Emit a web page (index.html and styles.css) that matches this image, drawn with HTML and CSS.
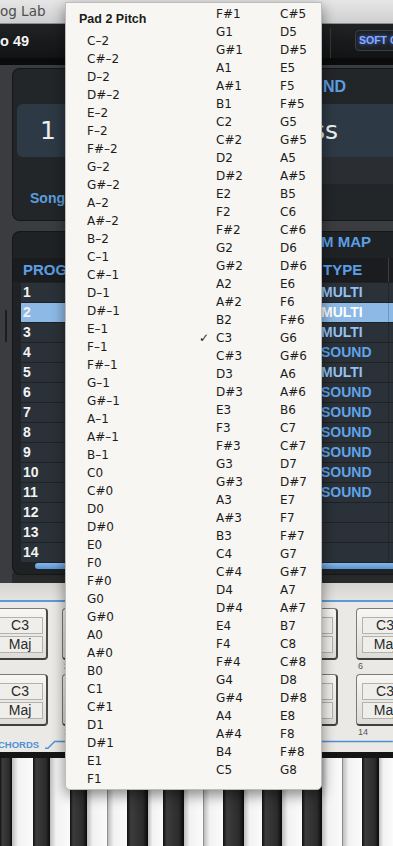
FILE: index.html
```html
<!DOCTYPE html>
<html lang="en">
<head>
    <link rel="stylesheet" href="styles.css">
</head>
<body>
    <div class="app">
        <div class="titlebar"><span class="title">og Lab</span></div>
        <div class="toolbar">
            <span class="device">o 49</span>
            <div class="toolbar-right">
                <span class="sep"></span>
                <span class="soft">SOFT CLIP</span>
            </div>
        </div>
        <div class="strip"></div>

        <div class="panels">
            <div class="sidebar"><span class="handle"></span></div>
            <div class="panel-col">
                <div class="panel sound-panel">
                    <div class="panel-title">SOUND</div>
                    <div class="sound-box">
                        <span class="sound-num">1</span>
                        <span class="sound-name">Bass</span>
                    </div>
                    <div class="sound-sub"></div>
                    <div class="sound-foot">Song</div>
                </div>
                <div class="panel map-panel">
                    <div class="panel-title map-title">PROGRAM MAP</div>
                    <div class="map-head">
                        <span class="col-num">PROG #</span>
                        <span class="col-type">TYPE</span>
                        <span class="col-rest"></span>
                    </div>
                    <div class="map-rows">
                        <div class="row"><span class="col-num">1</span><span class="col-type multi">MULTI</span><span class="col-rest"></span></div>
                        <div class="row active"><span class="col-num">2</span><span class="col-type multi">MULTI</span><span class="col-rest"></span></div>
                        <div class="row"><span class="col-num">3</span><span class="col-type multi">MULTI</span><span class="col-rest"></span></div>
                        <div class="row"><span class="col-num">4</span><span class="col-type">SOUND</span><span class="col-rest"></span></div>
                        <div class="row"><span class="col-num">5</span><span class="col-type multi">MULTI</span><span class="col-rest"></span></div>
                        <div class="row"><span class="col-num">6</span><span class="col-type">SOUND</span><span class="col-rest"></span></div>
                        <div class="row"><span class="col-num">7</span><span class="col-type">SOUND</span><span class="col-rest"></span></div>
                        <div class="row"><span class="col-num">8</span><span class="col-type">SOUND</span><span class="col-rest"></span></div>
                        <div class="row"><span class="col-num">9</span><span class="col-type">SOUND</span><span class="col-rest"></span></div>
                        <div class="row"><span class="col-num">10</span><span class="col-type">SOUND</span><span class="col-rest"></span></div>
                        <div class="row"><span class="col-num">11</span><span class="col-type">SOUND</span><span class="col-rest"></span></div>
                        <div class="row"><span class="col-num">12</span><span class="col-type"></span><span class="col-rest"></span></div>
                        <div class="row"><span class="col-num">13</span><span class="col-type"></span><span class="col-rest"></span></div>
                        <div class="row"><span class="col-num">14</span><span class="col-type"></span><span class="col-rest"></span></div>
                    </div>
                    <div class="scrollbar"></div>
                </div>
            </div>
        </div>

        <div class="chords">
            <div class="chords-top"></div>
            <div class="pad-row">
                <div class="pad-group left">
                    <div class="pad-slot"><div class="pad"><span class="cell">C3</span><span class="cell">Maj</span></div><span class="pad-label">1</span></div>
                    <div class="pad-slot"><div class="pad"><span class="cell">C3</span><span class="cell">Maj</span></div><span class="pad-label">2</span></div>
                </div>
                <div class="pad-group right">
                    <div class="pad-slot"><div class="pad"><span class="cell">C3</span><span class="cell">Maj</span></div><span class="pad-label">5</span></div>
                    <div class="pad-slot"><div class="pad"><span class="cell">C3</span><span class="cell">Maj</span></div><span class="pad-label">6</span></div>
                </div>
            </div>
            <div class="pad-row">
                <div class="pad-group left">
                    <div class="pad-slot"><div class="pad"><span class="cell">C3</span><span class="cell">Maj</span></div><span class="pad-label">9</span></div>
                    <div class="pad-slot"><div class="pad"><span class="cell">C3</span><span class="cell">Maj</span></div><span class="pad-label">10</span></div>
                </div>
                <div class="pad-group right">
                    <div class="pad-slot"><div class="pad"><span class="cell">C3</span><span class="cell">Maj</span></div><span class="pad-label">13</span></div>
                    <div class="pad-slot"><div class="pad"><span class="cell">C3</span><span class="cell">Maj</span></div><span class="pad-label">14</span></div>
                </div>
            </div>
            <div class="chords-label">
                <span class="chords-name">CHORDS</span>
                <svg class="chords-line" width="360" height="12" viewBox="0 0 360 12">
                    <path d="M0 10.5 L3 10.5 L10 3.5 L360 3.5" fill="none" stroke="#4f91d6" stroke-width="1.5"/>
                </svg>
            </div>
        </div>

        <div class="keyboard">
            <div class="keys">
                <span class="bk"></span><span class="wk"></span><span class="bk"></span><span class="wk"></span><span class="bk"></span>
                <span class="wk"></span><span class="wk edge"></span><span class="bk"></span><span class="wk"></span><span class="bk"></span>
                <span class="wk"></span><span class="wk edge"></span><span class="bk"></span><span class="wk"></span><span class="bk"></span>
                <span class="wk"></span><span class="bk"></span><span class="wk"></span><span class="wk edge"></span><span class="bk"></span>
                <span class="wk"></span>
            </div>
        </div>
    </div>

    <div class="menu">
        <ul class="menu-col first">
            <li class="menu-head">Pad 2 Pitch</li>
            <li>C–2</li><li>C#–2</li><li>D–2</li><li>D#–2</li><li>E–2</li><li>F–2</li>
            <li>F#–2</li><li>G–2</li><li>G#–2</li><li>A–2</li><li>A#–2</li><li>B–2</li>
            <li>C–1</li><li>C#–1</li><li>D–1</li><li>D#–1</li><li>E–1</li><li>F–1</li>
            <li>F#–1</li><li>G–1</li><li>G#–1</li><li>A–1</li><li>A#–1</li><li>B–1</li>
            <li>C0</li><li>C#0</li><li>D0</li><li>D#0</li><li>E0</li><li>F0</li>
            <li>F#0</li><li>G0</li><li>G#0</li><li>A0</li><li>A#0</li><li>B0</li>
            <li>C1</li><li>C#1</li><li>D1</li><li>D#1</li><li>E1</li><li>F1</li>
        </ul>
        <ul class="menu-col second">
            <li>F#1</li><li>G1</li><li>G#1</li><li>A1</li><li>A#1</li><li>B1</li>
            <li>C2</li><li>C#2</li><li>D2</li><li>D#2</li><li>E2</li><li>F2</li>
            <li>F#2</li><li>G2</li><li>G#2</li><li>A2</li><li>A#2</li><li>B2</li>
            <li class="checked">C3</li><li>C#3</li><li>D3</li><li>D#3</li><li>E3</li><li>F3</li>
            <li>F#3</li><li>G3</li><li>G#3</li><li>A3</li><li>A#3</li><li>B3</li>
            <li>C4</li><li>C#4</li><li>D4</li><li>D#4</li><li>E4</li><li>F4</li>
            <li>F#4</li><li>G4</li><li>G#4</li><li>A4</li><li>A#4</li><li>B4</li>
            <li>C5</li>
        </ul>
        <ul class="menu-col third">
            <li>C#5</li><li>D5</li><li>D#5</li><li>E5</li><li>F5</li>
            <li>F#5</li><li>G5</li><li>G#5</li><li>A5</li><li>A#5</li><li>B5</li>
            <li>C6</li><li>C#6</li><li>D6</li><li>D#6</li><li>E6</li><li>F6</li>
            <li>F#6</li><li>G6</li><li>G#6</li><li>A6</li><li>A#6</li><li>B6</li>
            <li>C7</li><li>C#7</li><li>D7</li><li>D#7</li><li>E7</li><li>F7</li>
            <li>F#7</li><li>G7</li><li>G#7</li><li>A7</li><li>A#7</li><li>B7</li>
            <li>C8</li><li>C#8</li><li>D8</li><li>D#8</li><li>E8</li><li>F8</li>
            <li>F#8</li><li>G8</li>
        </ul>
    </div>
</body>
</html>
```

FILE: styles.css
```css
* {
    margin: 0;
    padding: 0;
    box-sizing: border-box;
}

html, body {
    width: 393px;
    height: 846px;
    overflow: hidden;
    background: #1b1c1e;
    font-family: "DejaVu Sans", "Liberation Sans", sans-serif;
}

body {
    position: relative;
}

.app {
    display: flex;
    flex-direction: column;
    width: 393px;
    height: 846px;
    overflow: hidden;
}

/* window chrome */

.titlebar {
    height: 24px;
    display: flex;
    align-items: center;
    background: linear-gradient(#e6e6e6, #cfcfcf);
    border-bottom: 1px solid #8e8e8e;
}

.titlebar .title {
    font-size: 13.5px;
    color: #4d4d4d;
    white-space: nowrap;
}

.toolbar {
    height: 34px;
    display: flex;
    align-items: center;
    justify-content: space-between;
    background: linear-gradient(#202224, #121314);
}

.toolbar .device {
    font-family: "Liberation Sans", sans-serif;
    font-weight: bold;
    font-size: 14.5px;
    color: #f4f4f4;
    padding-top: 1px;
}

.toolbar-right {
    display: flex;
    align-items: center;
    height: 100%;
    margin-right: -22px;
}

.toolbar-right .sep {
    width: 1px;
    height: 30px;
    margin-top: 4px;
    background: #343638;
    margin-right: 24px;
}

.toolbar-right .soft {
    width: 60px;
    height: 21px;
    line-height: 19px;
    padding-left: 3px;
    border: 1px solid #3b3e42;
    border-radius: 4px;
    background: #1d2023;
    font-family: "Liberation Sans", sans-serif;
    font-weight: bold;
    font-size: 10.5px;
    color: #86acff;
    text-shadow: 0 0 4px #4f7bff;
    white-space: nowrap;
    overflow: hidden;
}

.strip {
    height: 7px;
    background: #0b0b0c;
}

/* panels */

.panels {
    height: 518px;
    display: flex;
    background: #3a3c3f;
}

.sidebar {
    width: 12px;
    padding-top: 245px;
    padding-left: 5px;
}

.sidebar .handle {
    display: block;
    width: 2px;
    height: 32px;
    background: #1c1d1f;
}

.panel-col {
    flex: 1;
    display: flex;
    flex-direction: column;
    gap: 10px;
    padding-top: 3px;
    padding-bottom: 8px;
    background: linear-gradient(to bottom, #3a3c3f 98%, #27292b 98%);
}

.panel {
    background: #232629;
    border: 1px solid #141618;
    border-right: 0;
    border-radius: 8px 0 0 8px;
}

.panel-title {
    display: flex;
    justify-content: flex-end;
    font-family: "Liberation Sans", sans-serif;
    font-weight: bold;
    font-size: 15px;
    color: #5a9fe6;
    white-space: nowrap;
}

.sound-panel {
    height: 153px;
}

.sound-panel .panel-title {
    height: 35px;
    padding-top: 8px;
    padding-right: 47px;
    line-height: 20px;
    font-size: 16px;
}

.sound-box {
    height: 53px;
    margin-left: 4px;
    display: flex;
    align-items: center;
    background: #2d3945;
    border-radius: 6px 0 0 6px;
    font-size: 25px;
    color: #eeeeee;
}

.sound-num {
    padding-left: 23px;
}

.sound-name {
    margin-left: auto;
    padding-right: 55px;
}

.sound-sub {
    height: 27px;
    margin-left: 180px;
    background: #2a2e33;
}

.sound-foot {
    padding-left: 17px;
    padding-top: 6px;
    font-family: "Liberation Sans", sans-serif;
    font-weight: bold;
    font-size: 14px;
    color: #5b9edf;
}

.map-panel {
    height: 344px;
    background: #1f2225;
}

.map-title {
    height: 26px;
    padding-right: 22px;
    line-height: 20px;
}

.map-head {
    height: 24px;
    display: flex;
    align-items: center;
    background: #1a1c1f;
    font-family: "Liberation Sans", sans-serif;
    font-weight: bold;
    font-size: 15px;
    color: #5a9fe6;
}

.map-head .col-num {
    flex: 1;
    padding-left: 10px;
}

.map-head .col-type {
    width: 67px;
    padding-left: 2px;
}

.col-rest {
    align-self: stretch;
    width: 5px;
    border-left: 1px solid #3a3f44;
}

.map-rows {
    display: flex;
    flex-direction: column;
    gap: 1px;
    padding-top: 1px;
    margin-left: 8px;
}

.row {
    height: 19px;
    display: flex;
    align-items: center;
    background: #2a3138;
    font-family: "Liberation Sans", sans-serif;
    font-weight: bold;
    font-size: 14px;
    color: #f2f2f2;
}

.row .col-num {
    flex: 1;
    padding-left: 2px;
}

.row .col-type {
    width: 67px;
    color: #5fa4ea;
}

.row .col-type.multi {
    color: #93c2f2;
}

.row .col-rest {
    border-left-color: #23282d;
}

.row.active {
    background: #8cb9e6;
}

.row.active .col-type {
    color: #ffffff;
}

.row.active .col-rest {
    border-left-color: #6f97c0;
}

.scrollbar {
    height: 6px;
    margin: 1px 0 0 22px;
    background: linear-gradient(#86b6ea, #5b93d0);
    border-radius: 3px 0 0 3px;
}

/* chord pads */

.chords {
    height: 170px;
    background: #eae9e5;
}

.chords-top {
    height: 19px;
    background: linear-gradient(#d5d4d0, #e4e3df);
    border-bottom: 2px solid #5b9ad8;
}

.pad-row {
    display: flex;
    justify-content: space-between;
}

.chords-top + .pad-row {
    margin-top: 6px;
}

.pad-group {
    display: flex;
    gap: 14px;
}

.pad-group.left {
    margin-left: -9px;
}

.pad-group.right {
    gap: 18px;
    margin-right: -20px;
}

.pad-slot {
    width: 57px;
    height: 66px;
}

.pad {
    height: 52px;
    display: flex;
    flex-direction: column;
    gap: 2px;
    padding: 8px 3px 0 5px;
    background: linear-gradient(#f8f7f4, #dddcd7);
    border: 1px solid #7b7b79;
    border-right: 2px solid #4a4a49;
    border-bottom: 2px solid #3f3f3e;
    border-radius: 4px;
}

.pad .cell {
    height: 17px;
    line-height: 15px;
    text-align: center;
    border: 1px solid #b3b2ae;
    background: #efeeea;
    font-family: "Liberation Sans", sans-serif;
    font-size: 14px;
    color: #2a2a2a;
}

.pad-label {
    display: block;
    padding: 1px 0 0 2px;
    font-family: "Liberation Sans", sans-serif;
    font-size: 9px;
    color: #555555;
}

.chords-label {
    display: flex;
    align-items: flex-end;
    height: 14px;
    margin-top: -3px;
}

.chords-name {
    margin-left: -2px;
    font-family: "Liberation Sans", sans-serif;
    font-weight: bold;
    font-size: 9.5px;
    line-height: 12px;
    color: #4f91d6;
}

.chords-line {
    display: block;
    margin-left: 6px;
    margin-bottom: 1px;
}

/* keyboard */

.keyboard {
    height: 94px;
    padding-top: 6px;
    background: #151515;
}

.keys {
    height: 100%;
    display: grid;
    grid-template-columns: 12px 21px 17px 20px 17px 20px 20px 21px 15px 21px 19px 20px 21px 18px 20px 20px 20px 20px 20px 17px 14px;
}

.keys .bk {
    background: linear-gradient(to right, #0e0e0e 0, #3c3c3c 18%, #2c2c2c 75%, #0a0a0a 100%);
}

.keys .wk {
    background: linear-gradient(to right, #bdbdbd 0, #f2f2f2 30%, #fbfbfb 100%);
}

.keys .wk.edge {
    border-left: 1px solid #8e8e8e;
}

/* popup menu */

.menu {
    position: absolute;
    top: 2px;
    left: 65px;
    width: 257px;
    height: 788px;
    display: flex;
    background: #f7f6f2;
    border: 1px solid #bdbdbd;
    border-radius: 0 0 5px 5px;
    box-shadow: 0 5px 14px rgba(0, 0, 0, 0.45);
    font-family: "DejaVu Sans", sans-serif;
    font-size: 12px;
    color: #1c1c1c;
}

.menu-col {
    list-style: none;
}

.menu-col li {
    height: 18px;
    line-height: 18px;
    white-space: nowrap;
}

.menu-col.first {
    width: 130px;
    padding: 5px 0 0 13px;
}

.menu-col.first li {
    padding-left: 8px;
}

.menu-col.first .menu-head {
    height: 22px;
    line-height: 22px;
    margin-bottom: 2px;
    padding-left: 0;
    font-family: "Liberation Sans", sans-serif;
    font-size: 12.5px;
    font-weight: bold;
}

.menu-col.second {
    width: 74px;
    padding: 2px 0 0 20px;
}

.menu-col.third {
    flex: 1;
    padding: 2px 0 0 10px;
}

.menu-col li.checked::before {
    content: "✓";
    display: inline-block;
    width: 17px;
    margin-left: -17px;
    font-size: 12px;
}
```
